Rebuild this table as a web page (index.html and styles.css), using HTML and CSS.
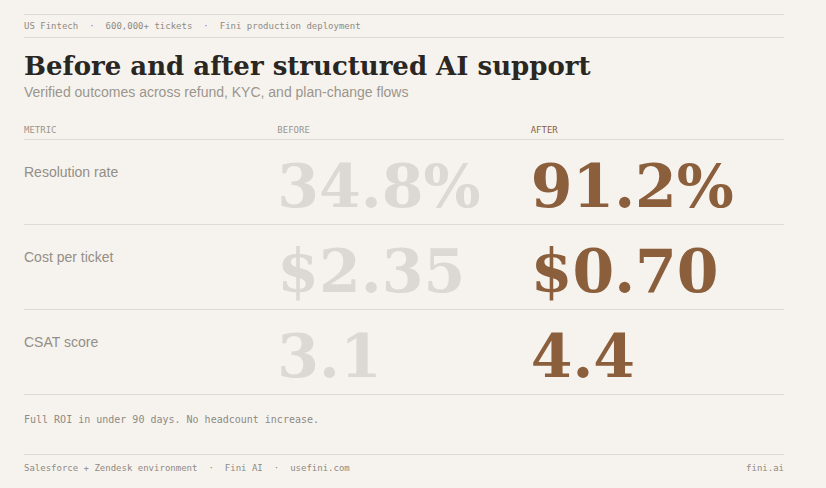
FILE: index.html
```html
<!DOCTYPE html>
<html lang="en">
<head>
<meta charset="utf-8">
<title>Before and after structured AI support</title>
<link rel="stylesheet" href="styles.css">
</head>
<body>
<div class="page">
  <div class="meta">
    <span>US Fintech</span><span class="sep">·</span><span>600,000+ tickets</span><span class="sep">·</span><span>Fini production deployment</span>
  </div>
  <h1 class="title">Before and after structured AI support</h1>
  <p class="subtitle">Verified outcomes across refund, KYC, and plan-change flows</p>

  <div class="table">
    <div class="row head">
      <div class="col">METRIC</div>
      <div class="col">BEFORE</div>
      <div class="col after-head">AFTER</div>
    </div>
    <div class="row">
      <div class="col label">Resolution rate</div>
      <div class="col num before">34.8%</div>
      <div class="col num after">91.2%</div>
    </div>
    <div class="row">
      <div class="col label">Cost per ticket</div>
      <div class="col num before">$2.35</div>
      <div class="col num after">$0.70</div>
    </div>
    <div class="row">
      <div class="col label">CSAT score</div>
      <div class="col num before">3.1</div>
      <div class="col num after">4.4</div>
    </div>
  </div>

  <p class="note">Full ROI in under 90 days. No headcount increase.</p>

  <div class="footer">
    <div class="footer-left"><span>Salesforce + Zendesk environment</span><span class="sep">·</span><span>Fini AI</span><span class="sep">·</span><span>usefini.com</span></div>
    <div class="footer-right">fini.ai</div>
  </div>
</div>
</body>
</html>
```

FILE: styles.css
```css
html, body {
  margin: 0;
  padding: 0;
  background: #f6f3ee;
}
body {
  font-family: "Liberation Sans", Arial, sans-serif;
  color: #2a2622;
}
.page {
  width: 760px;
  margin-left: 24px;
  padding-top: 14px;
}
.meta {
  border-top: 1px solid #dedad4;
  border-bottom: 1px solid #dedad4;
  padding: 6px 0 5px;
  font-family: "DejaVu Sans Mono", monospace;
  font-size: 9px;
  line-height: 11px;
  color: #8f8a83;
  display: flex;
}
.sep {
  padding: 0 11px;
}
.title {
  margin: 13px 0 0;
  font-family: "DejaVu Serif", serif;
  font-weight: bold;
  font-size: 26px;
  line-height: 31px;
  color: #2a2622;
}
.subtitle {
  margin: 2px 0 0;
  font-size: 14px;
  line-height: 17px;
  color: #9b958d;
}
.table {
  margin-top: 24px;
}
.row {
  display: grid;
  grid-template-columns: 1fr 1fr 1fr;
  border-bottom: 1px solid #dedad4;
  padding: 16px 0 8px;
  align-items: start;
}
.row.head {
  padding: 0 0 3px;
  font-family: "DejaVu Sans Mono", monospace;
  font-size: 9px;
  line-height: 11px;
  color: #9b958d;
}
.after-head {
  color: #8b5e3c;
}
.label {
  margin-top: 8px;
  font-size: 14px;
  line-height: 17px;
  color: #948e86;
}
.num {
  font-family: "DejaVu Serif", serif;
  font-weight: bold;
  font-size: 60px;
  line-height: 60px;
  white-space: nowrap;
}
.num.before {
  color: #dcd8d3;
}
.num.after {
  color: #8b5e3c;
}
.note {
  margin: 19px 0 0;
  font-family: "DejaVu Sans Mono", monospace;
  font-size: 10px;
  line-height: 12px;
  color: #8f8a83;
}
.footer {
  margin-top: 28px;
  border-top: 1px solid #dedad4;
  padding-top: 8px;
  display: flex;
  justify-content: space-between;
  font-family: "DejaVu Sans Mono", monospace;
  font-size: 9px;
  line-height: 11px;
  color: #8f8a83;
}
.footer-left {
  display: flex;
}
```
